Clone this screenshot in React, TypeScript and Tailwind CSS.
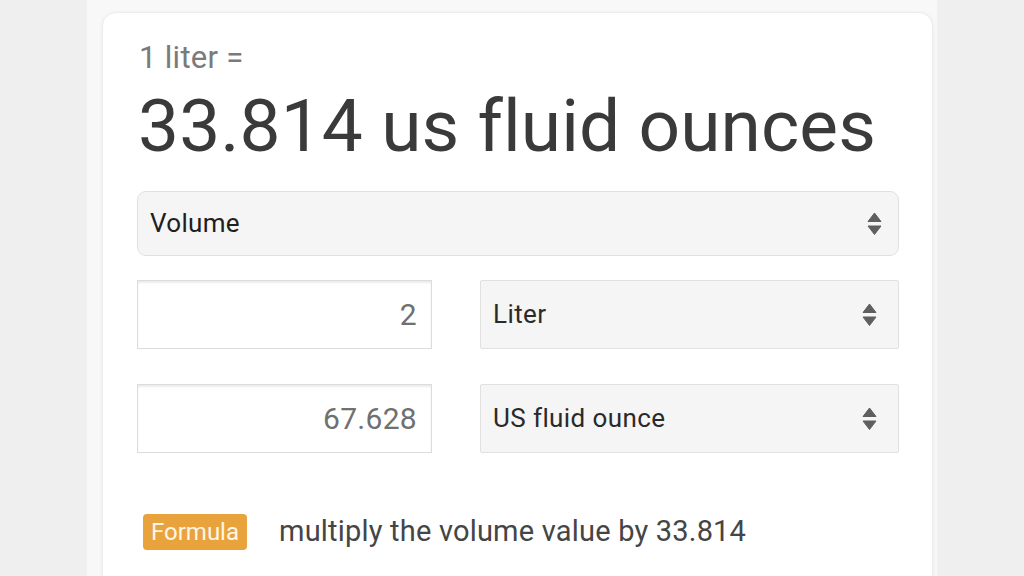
import React from "react"

const font = { fontFamily: "Roboto, 'Liberation Sans', Arial, sans-serif" }

function Arrows() {
  return (
    <svg width="15" height="24" viewBox="0 0 15 24" className="shrink-0">
      <path d="M7.5 1 L14 9.5 L1 9.5 Z" fill="#5f5f5f" strokeLinejoin="round" stroke="#5f5f5f" strokeWidth="1" />
      <path d="M1 14 L14 14 L7.5 22.5 Z" fill="#5f5f5f" strokeLinejoin="round" stroke="#5f5f5f" strokeWidth="1" />
    </svg>
  )
}

function UnitRow({ value, unit }: { value: string; unit: string }) {
  return (
    <div className="flex gap-[48px]">
      <div className="w-[295px] h-[69px] border border-[#dcdcdc] shadow-[inset_0_2px_2px_rgba(0,0,0,0.08)] bg-white flex items-center justify-end pr-[14px]">
        <span className="text-[30px] text-[#707070] tracking-[0.3px]">{value}</span>
      </div>
      <div className="w-[419px] h-[69px] border border-[#e0e0e0] rounded-[2px] bg-[#f5f5f5] flex items-center justify-between pl-[12px] pr-[21px]">
        <span className="text-[26px] text-[#2a2a2a] tracking-[0.4px]">{unit}</span>
        <Arrows />
      </div>
    </div>
  )
}

export default function App() {
  return (
    <div className="w-full h-[576px] bg-[#efefef] flex overflow-hidden" style={font}>
      <div className="ml-[87px] w-[850px] bg-[#f8f8f8] pt-[12px] pl-[15px] pr-[4px] flex">
        <div className="flex-1 h-[600px] bg-white rounded-[14px] border border-[#ececec] shadow-[0_1px_4px_rgba(0,0,0,0.06)] pt-[27px] pl-[34px]">
          <div className="pl-[2px] text-[31px] leading-[36px] text-[#7a7a7a] tracking-[0.3px]">1 liter =</div>
          <div className="pl-[1px] mt-[10px] text-[73px] leading-[80px] text-[#3a3a3a] tracking-[0.1px]">
            33.814 us fluid ounces
          </div>
          <div className="mt-[25px] w-[762px] h-[65px] border border-[#e0e0e0] rounded-[9px] bg-[#f5f5f5] flex items-center justify-between pl-[12px] pr-[16px]">
            <span className="text-[26px] text-[#1f1f1f] tracking-[0.3px]">Volume</span>
            <Arrows />
          </div>
          <div className="mt-[24px] flex flex-col gap-[35px]">
            <UnitRow value="2" unit="Liter" />
            <UnitRow value="67.628" unit="US fluid ounce" />
          </div>
          <div className="mt-[57px] pl-[6px] flex items-center gap-[32px]">
            <span className="h-[36px] px-[8px] rounded-[4px] bg-[#e9a33d] text-[#fff6e6] text-[24px] flex items-center">
              Formula
            </span>
            <span className="text-[29px] text-[#454545] tracking-[0.2px]">multiply the volume value by 33.814</span>
          </div>
        </div>
      </div>
    </div>
  )
}
